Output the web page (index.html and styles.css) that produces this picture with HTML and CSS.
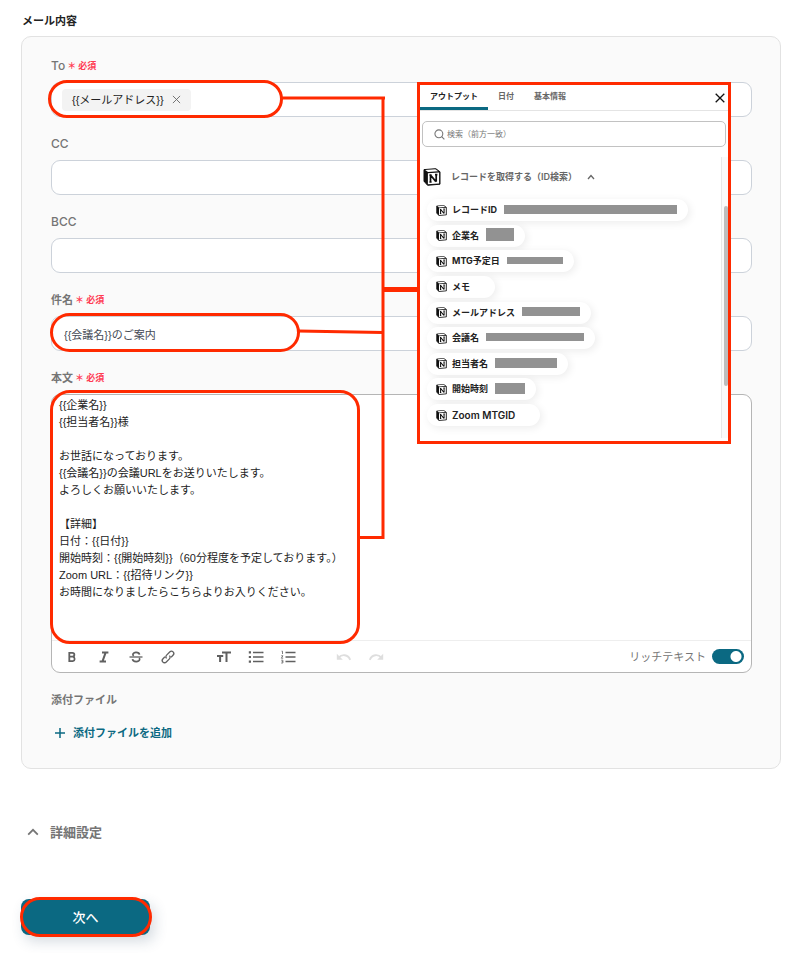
FILE: index.html
```html
<!DOCTYPE html>
<html lang="ja">
<head>
<meta charset="utf-8">
<meta name="viewport" content="width=device-width, initial-scale=1">
<title>メール内容</title>
<link rel="stylesheet" href="styles.css">
</head>
<body>
<svg class="defs" aria-hidden="true">
  <symbol id="notion" viewBox="0 0 18 18">
    <path d="M1 1.6 12.8.7 17 3.8V16.2L4.6 17.3 1 13.2Z" fill="#111" stroke="#111" stroke-width="1" stroke-linejoin="round"/>
    <path d="M2.2 2 12.3 1.3 15.2 3.3 5 4Z" fill="#fff"/>
    <path d="M4.9 5.2 16.1 4.5V15.5L4.9 16.2Z" fill="#fff"/>
    <path d="M6.400 7.2H8.600M7.5 7.2V14M6.400 14H8.600M7.700 7.3 12.9 13.6M12 6.6H14.400M13.200 6.6V13.8" fill="none" stroke="#111" stroke-width="1.700"/>
  </symbol>
</svg>
<main class="page">
  <h1 class="title">メール内容</h1>
  <section class="card">
    <div class="field">
      <label class="label" for="to">To <span class="required">＊ 必須</span></label>
      <div class="control marked marked-to">
        <span class="token">{{メールアドレス}}
          <button class="token-remove" type="button" aria-label="削除"><svg viewBox="0 0 10 10"><path d="M1 1 9 9M9 1 1 9" /></svg></button>
        </span>
        <input class="token-input" id="to" type="text">
      </div>
    </div>
    <div class="field">
      <label class="label" for="cc">CC</label>
      <div class="control"><input class="text-input" id="cc" type="text"></div>
    </div>
    <div class="field">
      <label class="label" for="bcc">BCC</label>
      <div class="control"><input class="text-input" id="bcc" type="text"></div>
    </div>
    <div class="field">
      <label class="label" for="subject">件名 <span class="required">＊ 必須</span></label>
      <div class="control marked marked-subject"><input class="text-input" id="subject" type="text" value="{{会議名}}のご案内"></div>
    </div>
    <div class="field">
      <label class="label" for="body">本文 <span class="required">＊ 必須</span></label>
      <div class="editor marked marked-body">
        <textarea class="editor-text" id="body">{{企業名}}
{{担当者名}}様

お世話になっております。
{{会議名}}の会議URLをお送りいたします。
よろしくお願いいたします。

【詳細】
日付：{{日付}}
開始時刻：{{開始時刻}}（60分程度を予定しております。）
Zoom URL：{{招待リンク}}
お時間になりましたらこちらよりお入りください。</textarea>
        <div class="toolbar">
          <div class="tools">
            <button class="tool" type="button" aria-label="太字"><svg viewBox="0 0 16 16"><path d="M5.3 3.8V12.2H8.8A2.3 2.3 0 0 0 8.8 7.7H5.3H8.4A1.95 1.95 0 0 0 8.4 3.8Z" stroke-width="1.8"/></svg></button>
            <button class="tool" type="button" aria-label="斜体"><svg viewBox="0 0 16 16"><path d="M6 3.6H12.4M3.6 12.4H10M9.6 3.6 6.5 12.4" stroke-width="2"/></svg></button>
            <button class="tool" type="button" aria-label="取り消し線"><svg viewBox="0 0 16 16"><path d="M1.5 8H14.5" stroke-width="1.3"/><path d="M11.5 5.6C11.2 2.7 4.9 2.7 4.9 5.4 4.9 6.1 5.3 6.5 5.8 6.8M4.5 10.2C4.8 13.3 11.6 13.3 11.6 10.4 11.6 9.9 11.4 9.5 11.1 9.2" stroke-width="1.7"/></svg></button>
            <button class="tool" type="button" aria-label="リンク"><svg viewBox="0 0 16 16"><path d="M6.6 9.4C5.6 8.4 5.7 7 6.6 6.1L9.7 3C10.7 2 12.2 2 13.1 2.9 14 3.8 14 5.3 13 6.3L11.1 8.2M9.4 6.6C10.4 7.6 10.3 9 9.4 9.9L6.3 13C5.3 14 3.8 14 2.9 13.1 2 12.2 2 10.7 3 9.7L4.9 7.8" stroke-width="1.3"/></svg></button>
          </div>
          <div class="tools">
            <button class="tool" type="button" aria-label="文字サイズ"><svg viewBox="0 0 16 16"><path d="M6 3.6H15M10.5 3.6V13M1 7.1H7.2M4.1 7.1V13" stroke-width="2"/></svg></button>
            <button class="tool" type="button" aria-label="箇条書き"><svg viewBox="0 0 16 16"><path d="M5 3.4H15.5M5 8H15.5M5 12.6H15.5" stroke-width="1.5"/><path d="M.8 3.4H3M.8 8H3M.8 12.6H3" stroke-width="2.2"/></svg></button>
            <button class="tool" type="button" aria-label="番号付きリスト"><svg viewBox="0 0 16 16"><path d="M5.5 3.4H15.5M5.5 8H15.5M5.5 12.6H15.5" stroke-width="1.5"/><path d="M1.6 2.2H2.5V5M1.2 6.8H3L1.3 9.2H3.2M1.2 11.2H2.9V14H1.2M1.7 12.6H2.9" stroke-width=".8"/></svg></button>
          </div>
          <div class="tools">
            <button class="tool" type="button" aria-label="元に戻す" disabled><svg viewBox="0 0 16 16"><path d="M2.6 8.6C5.8 5 12 5.2 14.2 10.8" stroke-width="1.8"/><path class="solid" d="M.8 4.8V10.8H6.8Z"/></svg></button>
            <button class="tool" type="button" aria-label="やり直す" disabled><svg viewBox="0 0 16 16"><path d="M13.4 8.6C10.2 5 4 5.2 1.8 10.8" stroke-width="1.8"/><path class="solid" d="M15.2 4.8V10.8H9.2Z"/></svg></button>
          </div>
          <label class="rich" for="rich">リッチテキスト</label>
          <input class="switch" id="rich" type="checkbox" role="switch" checked>
        </div>
      </div>
    </div>
    <div class="field">
      <span class="label">添付ファイル</span>
      <button class="add-file" type="button"><svg viewBox="0 0 12 12"><path d="M6 1V11M1 6H11"/></svg>添付ファイルを追加</button>
    </div>
  </section>
  <button class="details" type="button"><svg viewBox="0 0 12 12"><path d="M1.2 8.6 6 3.8 10.8 8.6"/></svg>詳細設定</button>
  <button class="next marked marked-next" type="button">次へ</button>

  <svg class="connectors" viewBox="0 0 140 444" aria-hidden="true">
    <path d="M2 3H105M103 2V444M18 236 103 237.500M80 442.500H104" stroke-width="3"/>
    <path d="M103 194.500H138" stroke-width="5"/>
  </svg>

  <aside class="picker">
    <div class="tabs" role="tablist">
      <button class="tab active" type="button" role="tab" aria-selected="true">アウトプット</button>
      <button class="tab" type="button" role="tab">日付</button>
      <button class="tab" type="button" role="tab">基本情報</button>
      <button class="close" type="button" aria-label="閉じる"><svg viewBox="0 0 10 10"><path d="M.7.7 9.300 9.300M9.300.7.7 9.300"/></svg></button>
    </div>
    <div class="search">
      <svg viewBox="0 0 12 12"><circle cx="5.300" cy="5.300" r="4.300"/><path d="M8.400 8.400 11.300 11.300"/></svg>
      <input type="search" aria-label="検索" placeholder="検索（前方一致）">
    </div>
    <div class="results">
      <div class="results-main">
        <button class="group" type="button"><svg class="group-logo"><use href="#notion"/></svg>レコードを取得する（ID検索）<svg class="group-caret" viewBox="0 0 8 8"><path d="M1 6 4 2.500 7 6"/></svg></button>
        <div class="outputs">
          <button class="output" type="button"><svg><use href="#notion"/></svg>レコードID<span class="mask mask-id"></span></button>
          <button class="output" type="button"><svg><use href="#notion"/></svg>企業名<span class="mask mask-company"></span></button>
          <button class="output" type="button"><svg><use href="#notion"/></svg>MTG予定日<span class="mask mask-date"></span></button>
          <button class="output plain" type="button"><svg><use href="#notion"/></svg>メモ</button>
          <button class="output" type="button"><svg><use href="#notion"/></svg>メールアドレス<span class="mask mask-mail"></span></button>
          <button class="output" type="button"><svg><use href="#notion"/></svg>会議名<span class="mask mask-meeting"></span></button>
          <button class="output" type="button"><svg><use href="#notion"/></svg>担当者名<span class="mask mask-person"></span></button>
          <button class="output" type="button"><svg><use href="#notion"/></svg>開始時刻<span class="mask mask-time"></span></button>
          <button class="output plain latin" type="button"><svg><use href="#notion"/></svg>Zoom MTGID</button>
        </div>
      </div>
      <div class="track"><div class="thumb"></div></div>
    </div>
  </aside>
</main>
</body>
</html>
```
FILE: styles.css
```css
*, *::after { box-sizing: border-box; }

:root {
  --teal: #0b6982;
  --mark: #ff2a00;
  --line: #ccd2da;
  --muted: #757575;
}

body {
  margin: 0;
  background: #fff;
  color: #222;
  font: 11px/16px Inter, "Noto Sans CJK JP", sans-serif;
}

button, input, textarea { font: inherit; color: inherit; }
button { border: 0; padding: 0; background: none; }
svg { fill: none; stroke: currentColor; flex: none; }
.defs { position: absolute; width: 0; height: 0; }
#notion { stroke: none; }

.page {
  position: relative;
  padding: 13px 22px 18px 21px;
}

.title {
  margin: 0 0 7px 1px;
  font-size: 11px;
  line-height: 16px;
  font-weight: 700;
}

.card {
  display: flex;
  flex-direction: column;
  gap: 19px;
  padding: 21px 28px 18px 29px;
  border: 1px solid #e2e2e2;
  border-radius: 10px;
  background: #fafafa;
}

.field {
  display: flex;
  flex-direction: column;
  align-items: stretch;
  gap: 8px;
}

.label {
  display: flex;
  align-items: center;
  gap: 2px;
  height: 16px;
  color: var(--muted);
  font-weight: 600;
}
.label[for="to"], .label[for="cc"], .label[for="bcc"] { font-size: 12px; font-weight: 500; }
.required { color: #ff3b52; font-size: 9px; font-weight: 700; }

.control {
  display: flex;
  align-items: center;
  height: 35px;
  border: 1px solid var(--line);
  border-radius: 9px;
  background: #fff;
}
.text-input, .token-input {
  flex: 1;
  min-width: 0;
  height: 100%;
  border: 0;
  padding: 0 12px;
  background: none;
  color: #444a55;
  outline: 0;
}
.text-input, .token, .editor-text {
  font-family: "Liberation Sans", "Noto Sans CJK JP", sans-serif;
}
.token {
  display: flex;
  align-items: center;
  gap: 8px;
  height: 22px;
  margin-left: 10px;
  padding: 0 10px;
  border-radius: 4px;
  background: #f3f3f3;
}
.token-remove { display: flex; color: #666; }
.token-remove svg { width: 9px; height: 9px; }

.editor {
  border: 1px solid #b5b5b5;
  border-radius: 9px;
  background: #fff;
}
.editor-text {
  display: block;
  width: 100%;
  height: 245px;
  padding: 2px 7px;
  border: 0;
  border-radius: 9px;
  background: none;
  line-height: 17px;
  resize: none;
  outline: 0;
}
.toolbar {
  display: flex;
  align-items: center;
  gap: 24px;
  height: 32px;
  padding: 0 7px 0 4px;
  border-top: 1px solid #eee;
}
.tools { display: flex; }
.tool {
  display: flex;
  justify-content: center;
  width: 32px;
  color: #606060;
}
.tool svg { width: 16px; height: 16px; }
.tool:disabled { color: #dedede; }
.solid { fill: currentColor; stroke: none; }
.rich { margin-left: auto; color: var(--muted); }
.switch {
  appearance: none;
  width: 32px;
  height: 15px;
  margin: 0 0 0 -18px;
  border-radius: 8px;
  background: radial-gradient(circle at 24px 50%, #fff 5px, transparent 6px) var(--teal);
}

.add-file, .details {
  display: flex;
  align-items: center;
  align-self: flex-start;
}
.add-file {
  gap: 7px;
  height: 34px;
  padding-left: 3px;
  color: var(--teal);
  font-weight: 700;
}
.add-file svg { width: 12px; height: 12px; stroke-width: 1.5; }
.details {
  gap: 11px;
  height: 24px;
  margin: 51px 0 55px 6px;
  color: var(--muted);
  font-size: 13px;
  font-weight: 700;
}
.details svg { width: 12px; height: 12px; stroke-width: 1.8; }
.next {
  display: block;
  width: 129px;
  height: 36px;
  border-radius: 8px;
  background: var(--teal);
  color: #fff;
  font-size: 13px;
  font-weight: 500;
  box-shadow: 4px 6px 14px rgba(40, 70, 100, .2);
}

/* Red call-outs drawn over the form */
.marked { position: relative; }
.marked::after {
  content: "";
  position: absolute;
  border: 3px solid var(--mark);
  border-radius: 20px;
  pointer-events: none;
}
.marked-to::after { left: -4px; top: -3px; width: 235px; height: 38px; }
.marked-subject::after { left: -2px; top: -4px; width: 250px; height: 39px; }
.marked-body::after { left: -2px; top: -5px; width: 310px; height: 254px; }
.marked-next::after { inset: -2px -2px -2px -1px; }

.connectors {
  position: absolute;
  left: 280px;
  top: 95px;
  width: 140px;
  height: 444px;
  stroke: var(--mark);
  pointer-events: none;
}

.picker {
  position: absolute;
  left: 417px;
  top: 82px;
  width: 314px;
  padding-bottom: 3px;
  border: 3px solid var(--mark);
  background: #fff;
}
.tabs {
  display: flex;
  height: 26px;
  border-bottom: 1px solid #e4e4e4;
}
.tab {
  padding: 0 10px 3px;
  color: #666;
  font-size: 8px;
  font-weight: 700;
}
.tab.active { color: #222; border-bottom: 3px solid var(--teal); padding-bottom: 0; }
.close { display: flex; align-items: center; margin: 0 3px 0 auto; color: #111; }
.close svg { width: 10px; height: 10px; stroke-width: 1.3; }
.search {
  display: flex;
  align-items: center;
  gap: 2px;
  height: 26px;
  margin: 10px 2px;
  padding: 0 11px;
  border: 1px solid #c2c2c2;
  border-radius: 5px;
  color: #777;
}
.search svg { width: 11px; height: 11px; stroke-width: 1.2; }
.search input {
  flex: 1;
  min-width: 0;
  padding: 0;
  border: 0;
  background: none;
  font-size: 8px;
  outline: 0;
}
.search input::placeholder { color: #777; opacity: 1; }

.results { display: flex; }
.results-main { flex: 1; padding: 10px 0 12px 3px; }
.group {
  display: flex;
  align-items: center;
  height: 20px;
  color: #666;
  font-size: 9px;
  font-weight: 600;
}
.group-logo { width: 18px; height: 18px; margin-right: 10px; }
.group-caret { width: 8px; height: 8px; margin-left: 10px; stroke-width: 1.3; }
.outputs {
  display: flex;
  flex-direction: column;
  align-items: flex-start;
  justify-content: space-between;
  height: 227px;
  margin: 12px 0 0 4px;
}
.output {
  display: flex;
  align-items: center;
  height: 22px;
  padding: 0 11px 0 9px;
  border-radius: 11px;
  background: #fff;
  box-shadow: 2px 2px 8px rgba(0, 0, 0, .08);
  font-size: 9px;
  font-weight: 700;
}
.output svg { width: 11px; height: 11px; margin-right: 5px; }
.plain { padding-right: 25px; }
.latin { font-size: 10px; font-weight: 600; }
.mask { margin: 0 0 2px 7px; background: #929292; }
.mask-id { width: 173px; height: 9px; }
.mask-company { width: 28px; height: 13px; }
.mask-date { width: 56px; height: 7px; }
.mask-mail { width: 58px; height: 9px; }
.mask-meeting { width: 98px; height: 8px; }
.mask-person { width: 62px; height: 10px; }
.mask-time { width: 30px; height: 11px; }

.track {
  display: flex;
  justify-content: flex-end;
  width: 7px;
  padding-top: 49px;
  border-left: 1px solid #e8e8e8;
  background: #fafafa;
}
.thumb { width: 4px; height: 180px; border-radius: 2px; background: #bdbdbd; }
```
